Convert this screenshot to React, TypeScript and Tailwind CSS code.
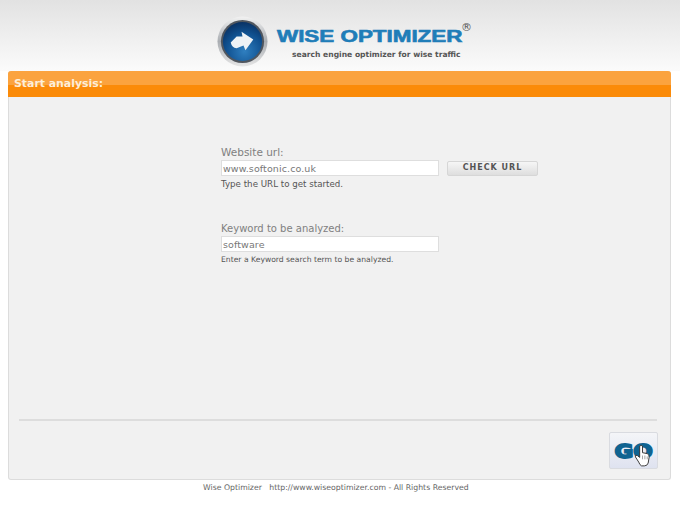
import { useState } from "react";

const font = "font-['DejaVu_Sans','Liberation_Sans',sans-serif]";

function LogoBall() {
  return (
    <svg width="51" height="51" viewBox="0 0 52 52" className="shrink-0">
      <defs>
        <linearGradient id="ring" x1="0" y1="0" x2="0" y2="1">
          <stop offset="0" stopColor="#f2f2f2" />
          <stop offset="0.5" stopColor="#a9adb2" />
          <stop offset="1" stopColor="#e6e6e6" />
        </linearGradient>
        <radialGradient id="ball" cx="0.55" cy="0.75" r="0.8">
          <stop offset="0" stopColor="#2f7fc0" />
          <stop offset="0.6" stopColor="#0f4f8e" />
          <stop offset="1" stopColor="#082c5c" />
        </radialGradient>
      </defs>
      <circle cx="26" cy="26" r="25.5" fill="url(#ring)" />
      <circle cx="26" cy="26" r="22" fill="#50565e" />
      <circle cx="26" cy="26" r="20" fill="url(#ball)" />
      <path d="M14 27 L20 21 L26 21 L25 16 L37 24 L29 35 L27 30 L20 33 Q15 32 14 27 Z" fill="#eef2f6" />
    </svg>
  );
}

function GoButton() {
  return (
    <button className="relative flex h-[37px] w-[49px] items-center justify-center rounded-[2px] border border-[#d9dbe0] bg-gradient-to-b from-[#f4f5f8] to-[#dfe3f0]">
      <span className="scale-x-[1.15] font-['DejaVu_Sans',sans-serif] text-[20px] leading-none font-bold tracking-[0px] text-[#0f6391] [-webkit-text-stroke:1.8px_#0f6391]">
        GO
      </span>
      <svg width="17" height="23" viewBox="0 0 18 24" className="absolute top-[11px] left-[24px]">
        <path
          d="M6 2 Q7.5 0.5 9 2 L9 9 L14 10 Q16.5 11 16 14 L15 20 Q14 23 11 23 L8 23 Q6 22 5 19 L1.5 13.5 Q1 11 3.5 12 L6 14 Z"
          fill="#fff"
          stroke="#333"
          strokeWidth="1"
        />
        <path d="M9 12 V16 M11.5 12 V16 M14 13 V16" stroke="#888" strokeWidth="0.8" />
      </svg>
    </button>
  );
}

export default function App() {
  const [url, setUrl] = useState("www.softonic.co.uk");
  const [keyword, setKeyword] = useState("software");

  return (
    <div className={`${font} flex h-[510px] w-[680px] flex-col overflow-hidden bg-white`}>
      <header className="flex h-[71px] shrink-0 items-start bg-gradient-to-b from-[#e2e2e2] to-[#fbfbfb] pt-[16px] pl-[217px]">
        <LogoBall />
        <div className="ml-[9px] flex flex-col">
          <div className="relative mt-[12px] h-[18px]">
            <span className="block origin-left scale-x-[1.4] font-['Liberation_Sans',sans-serif] text-[16px] leading-[18px] font-bold whitespace-nowrap text-[#1f7db8] [-webkit-text-stroke:0.6px_#1f7db8]">
              WISE OPTIMIZER
            </span>
            <span className="absolute top-[-6px] left-[184px] text-[11px] leading-[12px] text-[#555]">®</span>
          </div>
          <span className="mt-[3px] ml-[15px] text-[7.6px] leading-[12px] font-bold whitespace-nowrap text-[#555]">
            search engine optimizer for wise traffic
          </span>
        </div>
      </header>

      <main className="mr-[9px] ml-[8px] flex h-[409px] shrink-0 flex-col rounded-[3px] border border-t-0 border-[#dcdcdc] bg-[#f1f1f1]">
        <div className="-mx-px h-[26px] rounded-t-[3px] bg-[linear-gradient(#fba33f_0,#fba33f_54%,#fb8b09_54%,#fb8b09_100%)] pt-[5px] pl-[6px] text-[10.9px] leading-[15px] font-bold text-[#fdeed8]">
          Start analysis:
        </div>
        <form className="flex flex-1 flex-col pt-[48px]">
          <div className="ml-[212px]">
            <label className="block text-[10.5px] leading-[14px] text-[#808080]">Website url:</label>
            <div className="mt-[1px] flex items-center gap-[8px]">
              <input
                className="h-[16px] w-[218px] border border-[#dedede] bg-white px-[1px] text-[9.5px] tracking-[0.1px] text-[#777] outline-none"
                value={url}
                onChange={(event) => setUrl(event.target.value)}
              />
              <button
                type="button"
                className="h-[15px] w-[91px] rounded-[2px] border border-[#d6d6d6] bg-gradient-to-b from-[#f6f6f6] to-[#dedede] text-[8px] leading-none font-bold tracking-[1px] text-[#555]"
              >
                CHECK URL
              </button>
            </div>
            <p className="mt-[2px] text-[8.7px] leading-[12px] text-[#555]">Type the URL to get started.</p>
          </div>
          <div className="mt-[32px] ml-[212px]">
            <label className="block text-[10px] leading-[14px] text-[#808080]">Keyword to be analyzed:</label>
            <input
              className="block h-[16px] w-[218px] border border-[#dedede] bg-white px-[1px] text-[9.5px] tracking-[0.1px] text-[#777] outline-none"
              value={keyword}
              onChange={(event) => setKeyword(event.target.value)}
            />
            <p className="mt-[2px] text-[7.65px] leading-[12px] text-[#555]">Enter a Keyword search term to be analyzed.</p>
          </div>
          <div className="mt-auto mr-[13px] ml-[10px] h-[2px] bg-[#dddddd]" />
          <div className="flex justify-end pt-[11px] pr-[12px] pb-[10px]">
            <GoButton />
          </div>
        </form>
      </main>

      <footer className="mt-[2px] ml-[203px] text-[7.75px] leading-[12px] whitespace-pre text-[#666]">
        {"Wise Optimizer   http://www.wiseoptimizer.com - All Rights Reserved"}
      </footer>
    </div>
  );
}
